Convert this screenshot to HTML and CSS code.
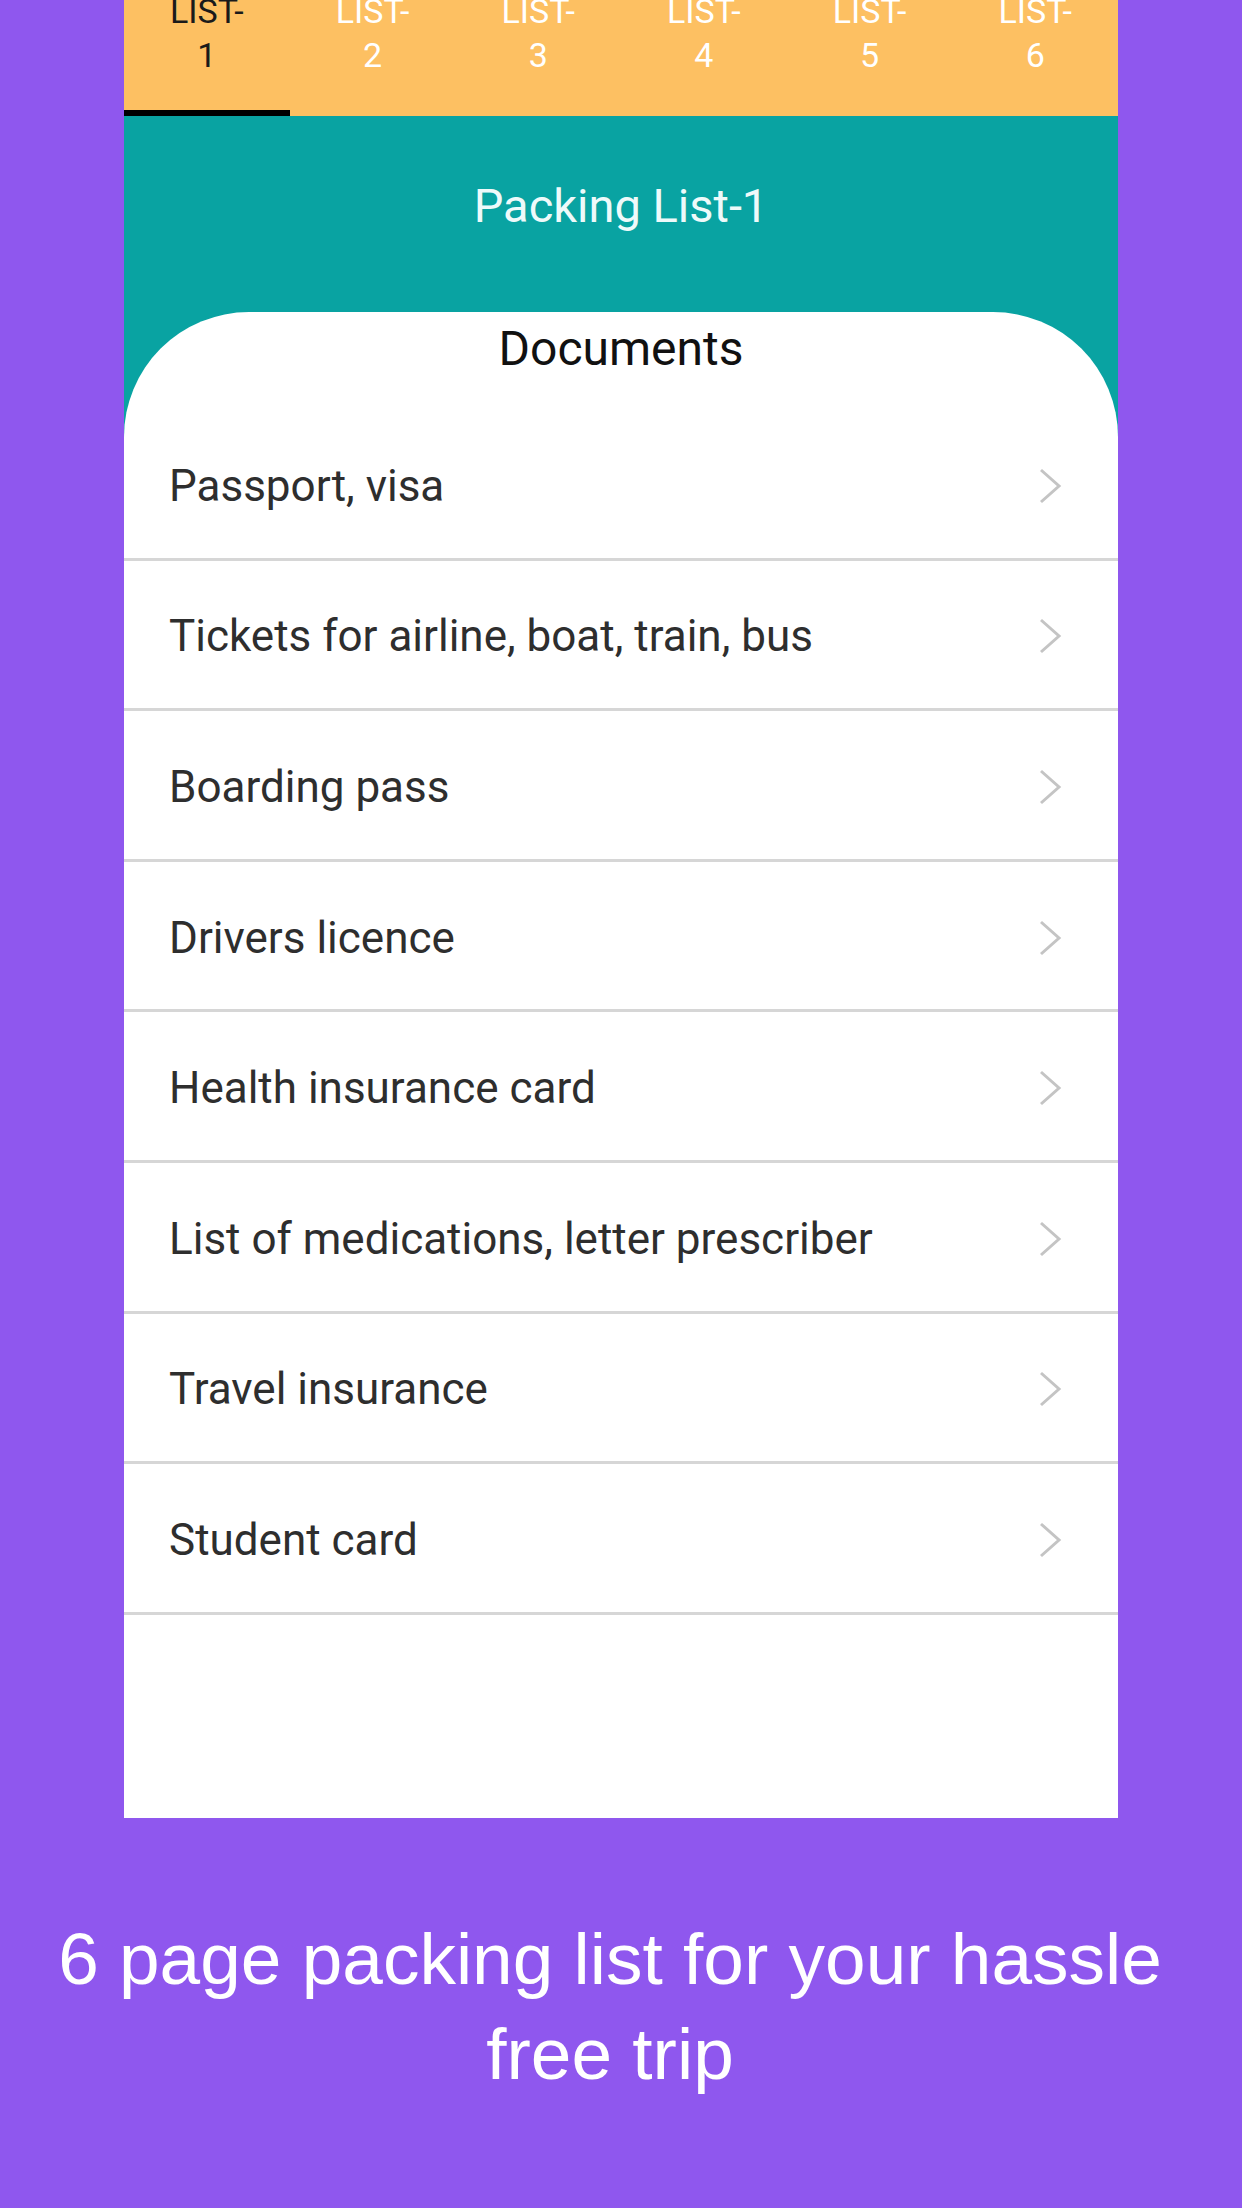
FILE: index.html
```html
<!DOCTYPE html>
<html>
<head>
<meta charset="utf-8">
<link rel="stylesheet" href="styles.css">
</head>
<body>
<div class="phone">
  <div class="tabs">
    <div class="tab active"><span class="tab-label">LIST-<br>1</span></div>
    <div class="tab"><span class="tab-label">LIST-<br>2</span></div>
    <div class="tab"><span class="tab-label">LIST-<br>3</span></div>
    <div class="tab"><span class="tab-label">LIST-<br>4</span></div>
    <div class="tab"><span class="tab-label">LIST-<br>5</span></div>
    <div class="tab"><span class="tab-label">LIST-<br>6</span></div>
  </div>
  <div class="title-bar">Packing List-1</div>
  <div class="card">
    <div class="card-head">Documents</div>
    <ul class="items">
      <li class="item"><span>Passport, visa</span><svg class="chev" viewBox="0 0 24 36"><polyline points="3,2 21,18 3,34"/></svg></li>
      <li class="item"><span>Tickets for airline, boat, train, bus</span><svg class="chev" viewBox="0 0 24 36"><polyline points="3,2 21,18 3,34"/></svg></li>
      <li class="item"><span>Boarding pass</span><svg class="chev" viewBox="0 0 24 36"><polyline points="3,2 21,18 3,34"/></svg></li>
      <li class="item"><span>Drivers licence</span><svg class="chev" viewBox="0 0 24 36"><polyline points="3,2 21,18 3,34"/></svg></li>
      <li class="item"><span>Health insurance card</span><svg class="chev" viewBox="0 0 24 36"><polyline points="3,2 21,18 3,34"/></svg></li>
      <li class="item"><span>List of medications, letter prescriber</span><svg class="chev" viewBox="0 0 24 36"><polyline points="3,2 21,18 3,34"/></svg></li>
      <li class="item"><span>Travel insurance</span><svg class="chev" viewBox="0 0 24 36"><polyline points="3,2 21,18 3,34"/></svg></li>
      <li class="item"><span>Student card</span><svg class="chev" viewBox="0 0 24 36"><polyline points="3,2 21,18 3,34"/></svg></li>
    </ul>
  </div>
</div>
<p class="caption">6 page packing list for your hassle free trip</p>
</body>
</html>
```
FILE: styles.css
```css
html, body {
  margin: 0;
  padding: 0;
}
body {
  background: #8f57ee;
  width: 1242px;
  height: 2208px;
  overflow: hidden;
  font-family: Roboto, "Noto Sans", sans-serif;
}
.phone {
  margin-left: 124px;
  width: 994px;
  background: #09a3a2;
}
.tabs {
  display: flex;
  height: 116px;
  background: #fdc062;
  overflow: hidden;
}
.tab {
  flex: 1;
  box-sizing: border-box;
  display: flex;
  justify-content: center;
  align-items: flex-start;
  color: #ffffff;
  font-size: 34px;
  line-height: 44px;
  text-align: center;
}
.tab-label {
  margin-top: -11px;
}
.tab.active {
  color: #1a1a1a;
  border-bottom: 6px solid #000;
}
.title-bar {
  box-sizing: border-box;
  height: 196px;
  padding-top: 62px;
  text-align: center;
  color: #eefafa;
  font-size: 47px;
  line-height: normal;
}
.card {
  box-sizing: border-box;
  height: 1506px;
  background: #ffffff;
  border-radius: 125px 125px 0 0;
}
.card-head {
  box-sizing: border-box;
  height: 98px;
  padding-top: 8px;
  text-align: center;
  color: #111111;
  font-size: 48px;
  line-height: normal;
}
.items {
  list-style: none;
  margin: 0;
  padding: 0;
}
.item {
  box-sizing: border-box;
  height: 150.6px;
  border-bottom: 3px solid #d6d6d6;
  display: flex;
  align-items: center;
  justify-content: space-between;
  padding: 4px 56px 0 45px;
  color: #2e2e2e;
  font-size: 44px;
}
.chev {
  width: 24px;
  height: 36px;
  fill: none;
  stroke: #c4c4c4;
  stroke-width: 3;
}
.caption {
  margin: 93px 51px 0 29px;
  color: #ffffff;
  font-family: "Liberation Sans", Arial, sans-serif;
  font-size: 73px;
  line-height: 95px;
  text-align: center;
}
```
